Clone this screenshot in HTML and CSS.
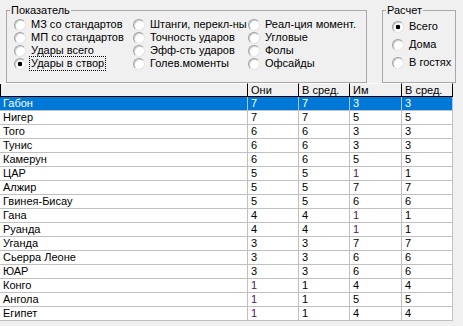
FILE: index.html
```html
<!DOCTYPE html>
<html lang="ru">
<head>
    <meta charset="UTF-8">
    <title>Статистика</title>
    <link rel="stylesheet" href="styles.css">
</head>
<body>
    <div class="panel">
        <fieldset class="group group-stat">
            <legend>Показатель</legend>
            <div class="radios radios-stat">
                <label class="radio"><input type="radio" name="stat"><span>МЗ со стандартов</span></label>
                <label class="radio"><input type="radio" name="stat"><span>МП со стандартов</span></label>
                <label class="radio"><input type="radio" name="stat"><span>Удары всего</span></label>
                <label class="radio"><input type="radio" name="stat" checked><span class="focus">Удары в створ</span></label>
                <label class="radio"><input type="radio" name="stat"><span>Штанги, перекл-ны</span></label>
                <label class="radio"><input type="radio" name="stat"><span>Точность ударов</span></label>
                <label class="radio"><input type="radio" name="stat"><span>Эфф-сть ударов</span></label>
                <label class="radio"><input type="radio" name="stat"><span>Голев.моменты</span></label>
                <label class="radio"><input type="radio" name="stat"><span>Реал-ция момент.</span></label>
                <label class="radio"><input type="radio" name="stat"><span>Угловые</span></label>
                <label class="radio"><input type="radio" name="stat"><span>Фолы</span></label>
                <label class="radio"><input type="radio" name="stat"><span>Офсайды</span></label>
            </div>
        </fieldset>
        <fieldset class="group group-calc">
            <legend>Расчет</legend>
            <div class="radios radios-calc">
                <label class="radio"><input type="radio" name="calc" checked><span>Всего</span></label>
                <label class="radio"><input type="radio" name="calc"><span>Дома</span></label>
                <label class="radio"><input type="radio" name="calc"><span>В гостях</span></label>
            </div>
        </fieldset>
    </div>

    <table class="grid">
        <colgroup>
            <col class="col-team">
            <col class="col-num">
            <col class="col-num">
            <col class="col-num-wide">
            <col class="col-num">
        </colgroup>
        <thead>
            <tr><th></th><th>Они</th><th>В сред.</th><th>Им</th><th>В сред.</th></tr>
        </thead>
        <tbody>
            <tr class="selected"><td>Габон</td><td>7</td><td>7</td><td>3</td><td>3</td></tr>
            <tr><td>Нигер</td><td>7</td><td>7</td><td>5</td><td>5</td></tr>
            <tr><td>Того</td><td>6</td><td>6</td><td>3</td><td>3</td></tr>
            <tr><td>Тунис</td><td>6</td><td>6</td><td>3</td><td>3</td></tr>
            <tr><td>Камерун</td><td>6</td><td>6</td><td>5</td><td>5</td></tr>
            <tr><td>ЦАР</td><td>5</td><td>5</td><td class="low">1</td><td>1</td></tr>
            <tr><td>Алжир</td><td>5</td><td>5</td><td>7</td><td>7</td></tr>
            <tr><td>Гвинея-Бисау</td><td>5</td><td>5</td><td>6</td><td>6</td></tr>
            <tr><td>Гана</td><td>4</td><td>4</td><td class="low">1</td><td>1</td></tr>
            <tr><td>Руанда</td><td>4</td><td>4</td><td class="low">1</td><td>1</td></tr>
            <tr><td>Уганда</td><td>3</td><td>3</td><td>7</td><td>7</td></tr>
            <tr><td>Сьерра Леоне</td><td>3</td><td>3</td><td>6</td><td>6</td></tr>
            <tr><td>ЮАР</td><td>3</td><td>3</td><td>6</td><td>6</td></tr>
            <tr><td>Конго</td><td class="low">1</td><td>1</td><td>4</td><td>4</td></tr>
            <tr><td>Ангола</td><td class="low">1</td><td>1</td><td>5</td><td>5</td></tr>
            <tr><td>Египет</td><td class="low">1</td><td>1</td><td>4</td><td>4</td></tr>
        </tbody>
    </table>
</body>
</html>
```

FILE: styles.css
```css
body {
    margin: 0;
    width: 463px;
    height: 326px;
    overflow: hidden;
    background-color: #f0f0f0;
    font-family: "Liberation Sans", Arial, sans-serif;
    font-size: 11px;
    color: #000;
}
.panel {
    display: flex;
    gap: 15px;
    height: 83px;
    padding: 4px 0 0 6px;
    box-sizing: border-box;
}
.group {
    margin: 0;
    padding: 0 0 3px 0;
    border: 1px solid #a8a8a8;
    box-sizing: border-box;
}
.group legend {
    margin-left: 3px;
    padding: 0 1px;
    line-height: 13px;
}
.group-stat {
    width: 361px;
}
.group-calc {
    width: 74px;
}
.radios {
    display: grid;
}
.radios-stat {
    grid-auto-flow: column;
    grid-template-rows: repeat(4, 13px);
    grid-template-columns: 119px 115px auto;
    padding: 1px 0 0 7px;
}
.radios-calc {
    row-gap: 5px;
    padding: 3px 0 0 9px;
}
.radio {
    display: flex;
    align-items: center;
    gap: 5px;
    height: 13px;
    line-height: 13px;
    white-space: nowrap;
}
.radio input {
    appearance: none;
    width: 12px;
    height: 12px;
    margin: 0;
    border: 1px solid;
    border-color: #a0a0a0 #e4e4e4 #e4e4e4 #a0a0a0;
    border-radius: 50%;
    background-color: #fff;
    box-shadow: inset 1px 1px 0 #d0d0d0;
    box-sizing: border-box;
    flex: none;
}
.radio input:checked {
    background: radial-gradient(circle, #000 0 2px, #fff 2.6px);
}
.focus {
    outline: 1px dotted #000;
    padding: 0 1px;
    margin-left: -1px;
}
.grid {
    width: 453px;
    table-layout: fixed;
    border-collapse: separate;
    border-spacing: 0;
    background-color: #fff;
}
.col-team {
    width: 248px;
}
.col-num {
    width: 51px;
}
.col-num-wide {
    width: 52px;
}
.grid th, .grid td {
    padding: 0 0 0 3px;
    line-height: 13px;
    text-align: left;
    font-weight: normal;
    white-space: nowrap;
    overflow: hidden;
    border-right: 1px solid #c0c0c0;
    border-bottom: 1px solid #c0c0c0;
}
.grid th {
    line-height: 12px;
    background-color: #f0f0f0;
    border-top: 1px solid #fff;
    border-right-color: #000;
    border-bottom-color: #000;
}
.grid th:first-child {
    box-shadow: inset 1px 0 0 #000;
}
.grid .selected td {
    background-color: #0078d7;
    color: #fff;
}
.grid td.low {
    color: #55105f;
}
```
